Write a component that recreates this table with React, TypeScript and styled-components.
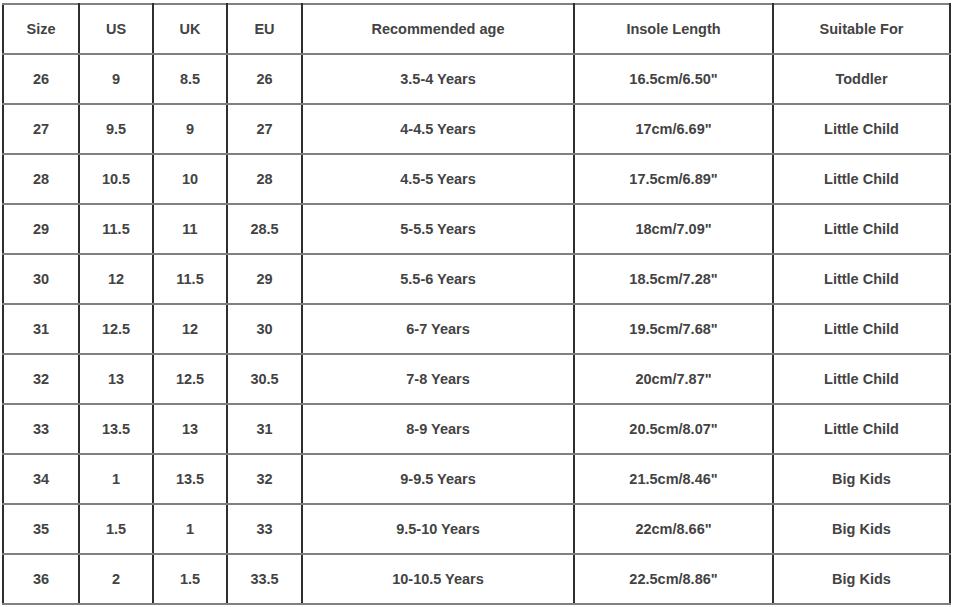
import styled, { createGlobalStyle } from 'styled-components';

const GlobalStyle = createGlobalStyle`
  body {
    margin: 0;
    background: #ffffff;
  }
`

const Wrapper = styled.div`
  padding: 3px 0 0 2px;
`

const Table = styled.table`
  border-collapse: collapse;
  table-layout: fixed;
  width: 947px;
  font-family: "Liberation Sans", Arial, sans-serif;
  font-size: 14.5px;
  font-weight: 700;
  color: #434343;
`

const Cell = styled.td`
  height: 48px;
  padding: 0;
  text-align: center;
  vertical-align: middle;
  border-top: 2px solid #808080;
  border-bottom: 2px solid #808080;
  border-left: 2px solid #2e2e2e;
  border-right: 2px solid #2e2e2e;
`

const HeadCell = styled(Cell).attrs({ as: 'th' })`
  font-weight: 700;
`

const widths = [76, 74, 74, 75, 272, 199, 177];

const headers = ['Size', 'US', 'UK', 'EU', 'Recommended age', 'Insole Length', 'Suitable For'];

const rows: string[][] = [
  ['26', '9', '8.5', '26', '3.5-4 Years', '16.5cm/6.50"', 'Toddler'],
  ['27', '9.5', '9', '27', '4-4.5 Years', '17cm/6.69"', 'Little Child'],
  ['28', '10.5', '10', '28', '4.5-5 Years', '17.5cm/6.89"', 'Little Child'],
  ['29', '11.5', '11', '28.5', '5-5.5 Years', '18cm/7.09"', 'Little Child'],
  ['30', '12', '11.5', '29', '5.5-6 Years', '18.5cm/7.28"', 'Little Child'],
  ['31', '12.5', '12', '30', '6-7 Years', '19.5cm/7.68"', 'Little Child'],
  ['32', '13', '12.5', '30.5', '7-8 Years', '20cm/7.87"', 'Little Child'],
  ['33', '13.5', '13', '31', '8-9 Years', '20.5cm/8.07"', 'Little Child'],
  ['34', '1', '13.5', '32', '9-9.5 Years', '21.5cm/8.46"', 'Big Kids'],
  ['35', '1.5', '1', '33', '9.5-10 Years', '22cm/8.66"', 'Big Kids'],
  ['36', '2', '1.5', '33.5', '10-10.5 Years', '22.5cm/8.86"', 'Big Kids'],
];

function SizeChart() {
  return (
    <Wrapper>
      <Table>
        <colgroup>
          {widths.map((w, i) => (
            <col key={i} style={{ width: w }} />
          ))}
        </colgroup>
        <thead>
          <tr>
            {headers.map((h) => (
              <HeadCell key={h}>{h}</HeadCell>
            ))}
          </tr>
        </thead>
        <tbody>
          {rows.map((row) => (
            <tr key={row[0]}>
              {row.map((v, i) => (
                <Cell key={i}>{v}</Cell>
              ))}
            </tr>
          ))}
        </tbody>
      </Table>
    </Wrapper>
  )
}

export default function App() {
  return (
    <>
      <GlobalStyle />
      <SizeChart />
    </>
  )
}
